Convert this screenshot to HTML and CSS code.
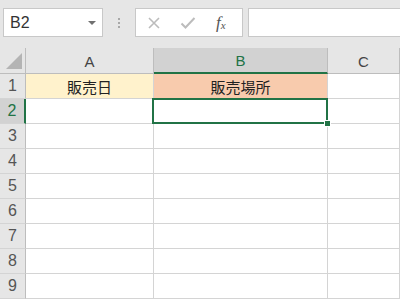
FILE: index.html
```html
<!DOCTYPE html>
<html lang="ja">
<head>
    <meta charset="UTF-8">
    <title>Sheet</title>
    <link rel="stylesheet" href="styles.css">
</head>
<body>
    <div class="toolbar">
        <div class="name-box">
            <span class="name-text">B2</span>
            <span class="name-arrow"></span>
        </div>
        <div class="sep">
            <span></span><span></span><span></span>
        </div>
        <div class="fx-buttons">
            <svg class="fx-icon" width="14" height="14" viewBox="0 0 14 14">
                <path d="M2 2 L12 12 M12 2 L2 12" stroke="#bcbcbc" stroke-width="1.6" fill="none"/>
            </svg>
            <svg class="fx-icon" width="16" height="14" viewBox="0 0 16 14">
                <path d="M1.5 7.5 L5.5 11.5 L14.5 2" stroke="#bcbcbc" stroke-width="2" fill="none"/>
            </svg>
            <span class="fx-text">f<sub>x</sub></span>
        </div>
        <div class="formula-input"></div>
    </div>

    <div class="grid">
        <div class="corner"><span class="tri"></span></div>
        <div class="col-head">A</div>
        <div class="col-head active">B</div>
        <div class="col-head">C</div>

        <div class="row-head">1</div>
        <div class="cell yellow">販売日</div>
        <div class="cell orange">販売場所</div>
        <div class="cell"></div>

        <div class="row-head active">2</div>
        <div class="cell"></div>
        <div class="cell selected"><span class="sel-box"></span><span class="handle"></span></div>
        <div class="cell"></div>

        <div class="row-head">3</div>
        <div class="cell"></div><div class="cell"></div><div class="cell"></div>
        <div class="row-head">4</div>
        <div class="cell"></div><div class="cell"></div><div class="cell"></div>
        <div class="row-head">5</div>
        <div class="cell"></div><div class="cell"></div><div class="cell"></div>
        <div class="row-head">6</div>
        <div class="cell"></div><div class="cell"></div><div class="cell"></div>
        <div class="row-head">7</div>
        <div class="cell"></div><div class="cell"></div><div class="cell"></div>
        <div class="row-head">8</div>
        <div class="cell"></div><div class="cell"></div><div class="cell"></div>
        <div class="row-head">9</div>
        <div class="cell"></div><div class="cell"></div><div class="cell"></div>
    </div>
</body>
</html>
```

FILE: styles.css
```css
body {
    margin: 0;
    width: 400px;
    height: 299px;
    overflow: hidden;
    background: #fff;
    font-family: "Noto Sans", "Noto Sans CJK JP", sans-serif;
}
.toolbar {
    height: 48px;
    background: #e6e6e6;
    display: flex;
    align-items: flex-start;
    padding-top: 8px;
    box-sizing: border-box;
}
.name-box {
    margin-left: 3px;
    width: 100px;
    height: 29px;
    box-sizing: border-box;
    background: #fff;
    border: 1px solid #c8c8c8;
    display: flex;
    align-items: center;
    justify-content: space-between;
    padding: 0 6px 0 6px;
}
.name-text {
    font-family: "Liberation Sans", sans-serif;
    font-size: 16px;
    color: #333;
}
.name-arrow {
    width: 0;
    height: 0;
    border-left: 4px solid transparent;
    border-right: 4px solid transparent;
    border-top: 4px solid #707070;
}
.sep {
    width: 32px;
    height: 29px;
    display: flex;
    flex-direction: column;
    align-items: center;
    justify-content: center;
    gap: 2px;
}
.sep span {
    width: 2px;
    height: 2px;
    background: #a8a8a8;
}
.fx-buttons {
    width: 108px;
    height: 29px;
    box-sizing: border-box;
    background: #fff;
    border: 1px solid #c8c8c8;
    display: flex;
    align-items: center;
    padding-left: 11px;
}
.fx-icon:first-child {
    margin-right: 19px;
}
.fx-text {
    margin-left: 20px;
    font-family: "Liberation Serif", serif;
    font-style: italic;
    font-size: 17px;
    color: #555;
}
.fx-text sub {
    font-size: 11px;
    vertical-align: -1px;
}
.formula-input {
    margin-left: 5px;
    flex: 1;
    height: 29px;
    box-sizing: border-box;
    background: #fff;
    border: 1px solid #c8c8c8;
    border-right: none;
}
.grid {
    display: grid;
    grid-template-columns: 26px 128px 174px 72px;
    grid-template-rows: 26px repeat(9, 25px);
}
.corner, .col-head, .row-head {
    background: #e6e6e6;
    border-right: 1px solid #bdbdbd;
    border-bottom: 1px solid #bdbdbd;
    color: #444;
    display: flex;
    align-items: center;
    justify-content: center;
    box-sizing: border-box;
}
.corner {
    position: relative;
}
.tri {
    position: absolute;
    right: 3px;
    bottom: 4px;
    width: 0;
    height: 0;
    border-left: 16px solid transparent;
    border-bottom: 16px solid #b4b4b4;
}
.col-head {
    font-family: "Liberation Sans", sans-serif;
    font-size: 15px;
    padding-top: 1px;
}
.col-head.active {
    background: #d2d2d2;
    color: #217346;
    border-bottom: 2px solid #217346;
}
.row-head {
    font-family: "Liberation Sans", sans-serif;
    font-size: 16px;
    color: #555;
    border-right-color: #bdbdbd;
    border-bottom-color: #d4d4d4;
}
.row-head.active {
    background: #d2d2d2;
    color: #217346;
    border-right: 2px solid #217346;
}
.cell {
    border-right: 1px solid #d4d4d4;
    border-bottom: 1px solid #d4d4d4;
    box-sizing: border-box;
    display: flex;
    align-items: center;
    justify-content: center;
    font-family: "Noto Sans CJK JP", sans-serif;
    font-size: 15px;
    color: #222;
}
.cell.yellow {
    background: #fff2cc;
}
.cell.orange {
    background: #f8cbad;
}
.cell.selected {
    position: relative;
}
.sel-box {
    position: absolute;
    left: -2px;
    top: -1px;
    right: -1px;
    bottom: -1px;
    border: 2px solid #217346;
}
.handle {
    position: absolute;
    right: -4px;
    bottom: -4px;
    width: 5px;
    height: 5px;
    background: #217346;
    border: 1px solid #fff;
}
```
